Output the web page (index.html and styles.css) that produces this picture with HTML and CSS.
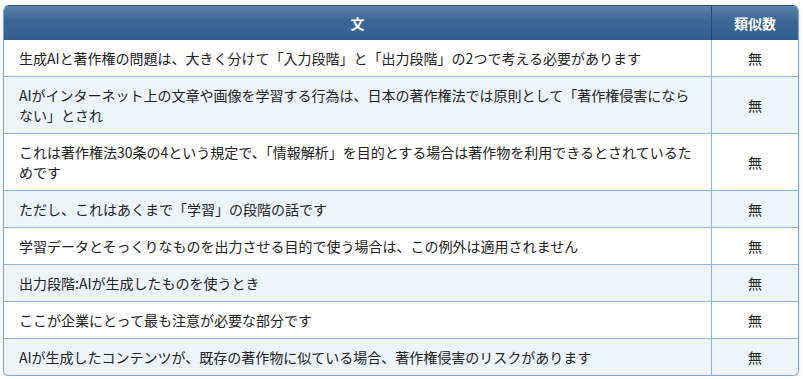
FILE: index.html
```html
<!DOCTYPE html>
<html lang="ja">
<head>
<meta charset="utf-8">
<link rel="stylesheet" href="styles.css">
</head>
<body>
<div class="wrap">
<table class="grid">
<thead>
<tr><th class="c-text">文</th><th class="c-num">類似数</th></tr>
</thead>
<tbody>
<tr><td>生成AIと著作権の問題は、大きく分けて「入力段階」と「出力段階」の2つで考える必要があります</td><td class="num">無</td></tr>
<tr><td>AIがインターネット上の文章や画像を学習する行為は、日本の著作権法では原則として「著作権侵害にならない」とされ</td><td class="num">無</td></tr>
<tr><td>これは著作権法30条の4という規定で、「情報解析」を目的とする場合は著作物を利用できるとされているためです</td><td class="num">無</td></tr>
<tr><td>ただし、これはあくまで「学習」の段階の話です</td><td class="num">無</td></tr>
<tr><td>学習データとそっくりなものを出力させる目的で使う場合は、この例外は適用されません</td><td class="num">無</td></tr>
<tr><td>出力段階:AIが生成したものを使うとき</td><td class="num">無</td></tr>
<tr><td>ここが企業にとって最も注意が必要な部分です</td><td class="num">無</td></tr>
<tr><td>AIが生成したコンテンツが、既存の著作物に似ている場合、著作権侵害のリスクがあります</td><td class="num">無</td></tr>
</tbody>
</table>
</div>
</body>
</html>
```
FILE: styles.css
```css
html, body {
  margin: 0;
  padding: 0;
  background: #ffffff;
}
body {
  font-family: "Noto Sans CJK JP", "Noto Sans", sans-serif;
  font-size: 14px;
  color: #222;
}
.wrap {
  margin: 5px 4px 0 3px;
  width: 796px;
  border-radius: 6px;
  overflow: hidden;
  border: 1px solid #7ea9d6;
  border-top-color: #2d5380;
  box-shadow: 0 2px 3px rgba(0,0,0,0.18);
  box-sizing: border-box;
}
.grid {
  width: 100%;
  border-collapse: collapse;
  table-layout: fixed;
}
.grid th {
  background: linear-gradient(#5c83ab, #3a6695 45%, #31608f);
  color: #fff;
  font-weight: bold;
  text-align: center;
  line-height: 20px;
  padding: 7px 0 7px;
  border-right: 1px solid #264a75;
}
.grid th:last-child { border-right: none; }
.c-num { width: 86px; }
.grid td {
  line-height: 20px;
  padding: 8px 14px 8px 15px;
  border-top: 1px solid #8db6e2;
  border-right: 1px solid #8db6e2;
  vertical-align: middle;
}
.grid td:last-child { border-right: none; }
.grid thead + tbody tr:first-child td { border-top: none; }
.grid tbody tr:nth-child(even) td { background: #eef4fc; }
.grid tbody tr:nth-child(odd) td { background: #ffffff; }
.grid td.num {
  text-align: center;
  padding: 8px 0;
}
```
